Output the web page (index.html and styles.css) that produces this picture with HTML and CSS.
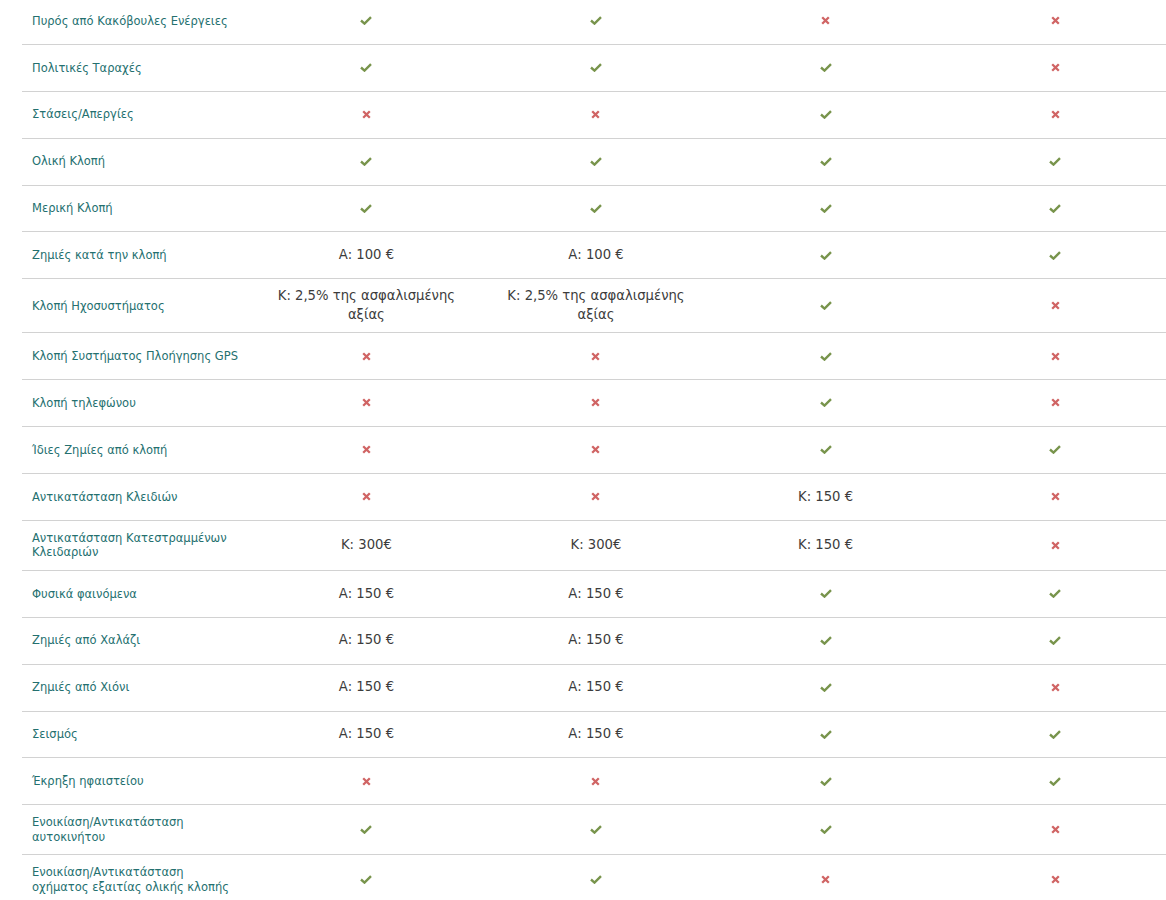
FILE: index.html
```html
<!DOCTYPE html>
<html lang="el">
<head>
<meta charset="utf-8">
<title>Καλύψεις</title>
<link rel="stylesheet" href="styles.css">
</head>
<body>
<svg width="0" height="0" class="defs" aria-hidden="true">
  <defs>
    <symbol id="ok" viewBox="0 0 12 9"><path d="M1 4.5 L4.5 7.6 L11 1.2" fill="none" stroke="currentColor" stroke-width="2.4" stroke-linejoin="miter"/></symbol>
    <symbol id="no" viewBox="0 0 9 9"><path d="M1.2 1.2 L7.8 7.8 M7.8 1.2 L1.2 7.8" fill="none" stroke="currentColor" stroke-width="2.3"/></symbol>
  </defs>
</svg>
<table class="cmp">
  <tbody id="rows"></tbody>
</table>
<script src="app.js"></script>
</body>
</html>
```

FILE: app.js
```js
const Y = 'Y', N = 'N';
const data = [
  ['Πυρός από Κακόβουλες Ενέργειες', Y, Y, N, N],
  ['Πολιτικές Ταραχές', Y, Y, Y, N],
  ['Στάσεις/Απεργίες', N, N, Y, N],
  ['Ολική Κλοπή', Y, Y, Y, Y],
  ['Μερική Κλοπή', Y, Y, Y, Y],
  ['Ζημιές κατά την κλοπή', 'Α: 100 €', 'Α: 100 €', Y, Y],
  ['Κλοπή Ηχοσυστήματος', 'Κ: 2,5% της ασφαλισμένης αξίας', 'Κ: 2,5% της ασφαλισμένης αξίας', Y, N],
  ['Κλοπή Συστήματος Πλοήγησης GPS', N, N, Y, N],
  ['Κλοπή τηλεφώνου', N, N, Y, N],
  ['Ίδιες Ζημίες από κλοπή', N, N, Y, Y],
  ['Αντικατάσταση Κλειδιών', N, N, 'Κ: 150 €', N],
  ['Αντικατάσταση Κατεστραμμένων Κλειδαριών', 'Κ: 300€', 'Κ: 300€', 'Κ: 150 €', N],
  ['Φυσικά φαινόμενα', 'Α: 150 €', 'Α: 150 €', Y, Y],
  ['Ζημιές από Χαλάζι', 'Α: 150 €', 'Α: 150 €', Y, Y],
  ['Ζημιές από Χιόνι', 'Α: 150 €', 'Α: 150 €', Y, N],
  ['Σεισμός', 'Α: 150 €', 'Α: 150 €', Y, Y],
  ['Έκρηξη ηφαιστείου', N, N, Y, Y],
  ['Ενοικίαση/Αντικατάσταση αυτοκινήτου', Y, Y, Y, N],
  ['Ενοικίαση/Αντικατάσταση οχήματος εξαιτίας ολικής κλοπής', Y, Y, N, N]
];
const tb = document.getElementById('rows');
for (const r of data) {
  const tr = document.createElement('tr');
  const th = document.createElement('td');
  th.className = 'label';
  th.textContent = r[0];
  tr.appendChild(th);
  for (let i = 1; i < r.length; i++) {
    const td = document.createElement('td');
    td.className = 'val';
    const v = r[i];
    if (v === Y) {
      td.innerHTML = '<svg class="ico ok" width="12" height="9"><use href="#ok"/></svg>';
    } else if (v === N) {
      td.innerHTML = '<svg class="ico no" width="9" height="9"><use href="#no"/></svg>';
    } else {
      td.textContent = v;
    }
    tr.appendChild(td);
  }
  tb.appendChild(tr);
}
```

FILE: styles.css
```css
html, body {
  margin: 0;
  padding: 0;
  background: #fff;
  overflow: hidden;
}
body {
  font-family: "DejaVu Sans", Verdana, sans-serif;
}
.defs {
  position: absolute;
}
.cmp {
  border-collapse: collapse;
  table-layout: fixed;
  width: 1148px;
  margin: -2px 0 0 22px;
}
.cmp td {
  border-bottom: 1px solid #d2d2d2;
  padding: 10px 10px;
  height: 25.9px;
  vertical-align: middle;
}
.label {
  font-size: 11.5px;
  line-height: 14.5px;
  color: #24706f;
  text-align: left;
}
.cmp .val {
  padding: 8px 10px;
  font-size: 13.2px;
  line-height: 18.5px;
  color: #3c3c3c;
  text-align: center;
}
.ico {
  display: inline-block;
  vertical-align: middle;
}
.ok { color: #78944c; }
.no { color: #d06464; }
```
